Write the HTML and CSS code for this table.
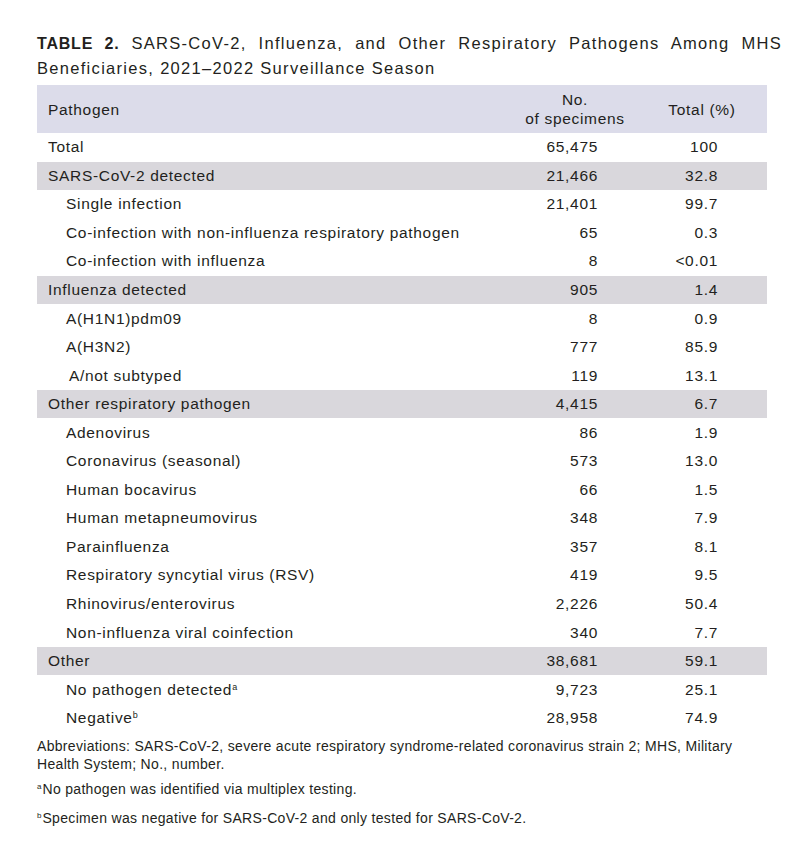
FILE: index.html
```html
<!DOCTYPE html>
<html lang="en">
<head>
    <meta charset="UTF-8">
    <title>Table 2</title>
    <link rel="stylesheet" href="styles.css">
</head>
<body>
    <div class="page">
        <h2 class="title"><span class="label">TABLE 2.</span> SARS-CoV-2, Influenza, and Other Respiratory Pathogens Among MHS Beneficiaries, 2021–2022 Surveillance Season</h2>

        <table class="data">
            <thead>
                <tr>
                    <th class="name">Pathogen</th>
                    <th class="num">No.<br>of specimens</th>
                    <th class="pct">Total (%)</th>
                </tr>
            </thead>
            <tbody>
                <tr><td class="name">Total</td><td class="num">65,475</td><td class="pct">100</td></tr>
                <tr class="group"><td class="name">SARS-CoV-2 detected</td><td class="num">21,466</td><td class="pct">32.8</td></tr>
                <tr><td class="name sub">Single infection</td><td class="num">21,401</td><td class="pct">99.7</td></tr>
                <tr><td class="name sub">Co-infection with non-influenza respiratory pathogen</td><td class="num">65</td><td class="pct">0.3</td></tr>
                <tr><td class="name sub">Co-infection with influenza</td><td class="num">8</td><td class="pct">&lt;0.01</td></tr>
                <tr class="group"><td class="name">Influenza detected</td><td class="num">905</td><td class="pct">1.4</td></tr>
                <tr><td class="name sub">A(H1N1)pdm09</td><td class="num">8</td><td class="pct">0.9</td></tr>
                <tr><td class="name sub">A(H3N2)</td><td class="num">777</td><td class="pct">85.9</td></tr>
                <tr><td class="name sub"><span class="nudge">A/not subtyped</span></td><td class="num">119</td><td class="pct">13.1</td></tr>
                <tr class="group"><td class="name">Other respiratory pathogen</td><td class="num">4,415</td><td class="pct">6.7</td></tr>
                <tr><td class="name sub">Adenovirus</td><td class="num">86</td><td class="pct">1.9</td></tr>
                <tr><td class="name sub">Coronavirus (seasonal)</td><td class="num">573</td><td class="pct">13.0</td></tr>
                <tr><td class="name sub">Human bocavirus</td><td class="num">66</td><td class="pct">1.5</td></tr>
                <tr><td class="name sub">Human metapneumovirus</td><td class="num">348</td><td class="pct">7.9</td></tr>
                <tr><td class="name sub">Parainfluenza</td><td class="num">357</td><td class="pct">8.1</td></tr>
                <tr><td class="name sub">Respiratory syncytial virus (RSV)</td><td class="num">419</td><td class="pct">9.5</td></tr>
                <tr><td class="name sub">Rhinovirus/enterovirus</td><td class="num">2,226</td><td class="pct">50.4</td></tr>
                <tr><td class="name sub">Non-influenza viral coinfection</td><td class="num">340</td><td class="pct">7.7</td></tr>
                <tr class="group"><td class="name">Other</td><td class="num">38,681</td><td class="pct">59.1</td></tr>
                <tr><td class="name sub">No pathogen detected<sup>a</sup></td><td class="num">9,723</td><td class="pct">25.1</td></tr>
                <tr><td class="name sub">Negative<sup>b</sup></td><td class="num">28,958</td><td class="pct">74.9</td></tr>
            </tbody>
        </table>

        <div class="notes">
            <p class="abbr">Abbreviations: SARS-CoV-2, severe acute respiratory syndrome-related coronavirus strain 2; MHS, Military Health System; No., number.</p>
            <p><sup>a</sup>No pathogen was identified via multiplex testing.</p>
            <p><sup>b</sup>Specimen was negative for SARS-CoV-2 and only tested for SARS-CoV-2.</p>
        </div>
    </div>
</body>
</html>
```

FILE: styles.css
```css
body {
    margin: 0;
    background: white;
    color: #231f20;
    font-family: "Liberation Sans", Arial, sans-serif;
}
.page {
    width: 730px;
    padding: 31px 0 0 37px;
}
.title {
    margin: 0 -15px 5px 0;
    font-size: 16.5px;
    font-weight: normal;
    letter-spacing: 1.3px;
    line-height: 24px;
    text-align: justify;
}
.label {
    font-weight: bold;
    letter-spacing: 0.8px;
    font-size: 16px;
}
.data {
    width: 730px;
    border-collapse: collapse;
    font-size: 15.5px;
    letter-spacing: 0.68px;
}
.data th {
    background: #dcdcea;
    font-weight: normal;
    height: 48px;
    line-height: 19px;
    padding: 0;
}
.data td {
    height: 28.55px;
    padding: 0;
    line-height: 18px;
}
.group td {
    background: #d9d7dc;
}
.name {
    text-align: left;
    padding-left: 11px !important;
}
.name.sub {
    padding-left: 29px !important;
}
.nudge {
    padding-left: 3px;
}
th.num {
    width: 150px;
    text-align: center;
}
td.num {
    text-align: right;
    padding-right: 52px !important;
}
th.pct {
    width: 104px;
    text-align: center;
    padding-right: 13px !important;
}
td.pct {
    text-align: right;
    padding-right: 49px !important;
}
sup {
    font-size: 9px;
    line-height: 0;
    vertical-align: 5px;
    letter-spacing: 0;
}
.notes {
    font-size: 14px;
    letter-spacing: 0.32px;
    line-height: 18px;
    margin-top: 5px;
}
.notes p {
    margin: 0 0 11px 0;
}
.notes .abbr {
    margin-bottom: 7px;
}
.notes sup {
    font-size: 8px;
    margin-right: 1px;
}
```
